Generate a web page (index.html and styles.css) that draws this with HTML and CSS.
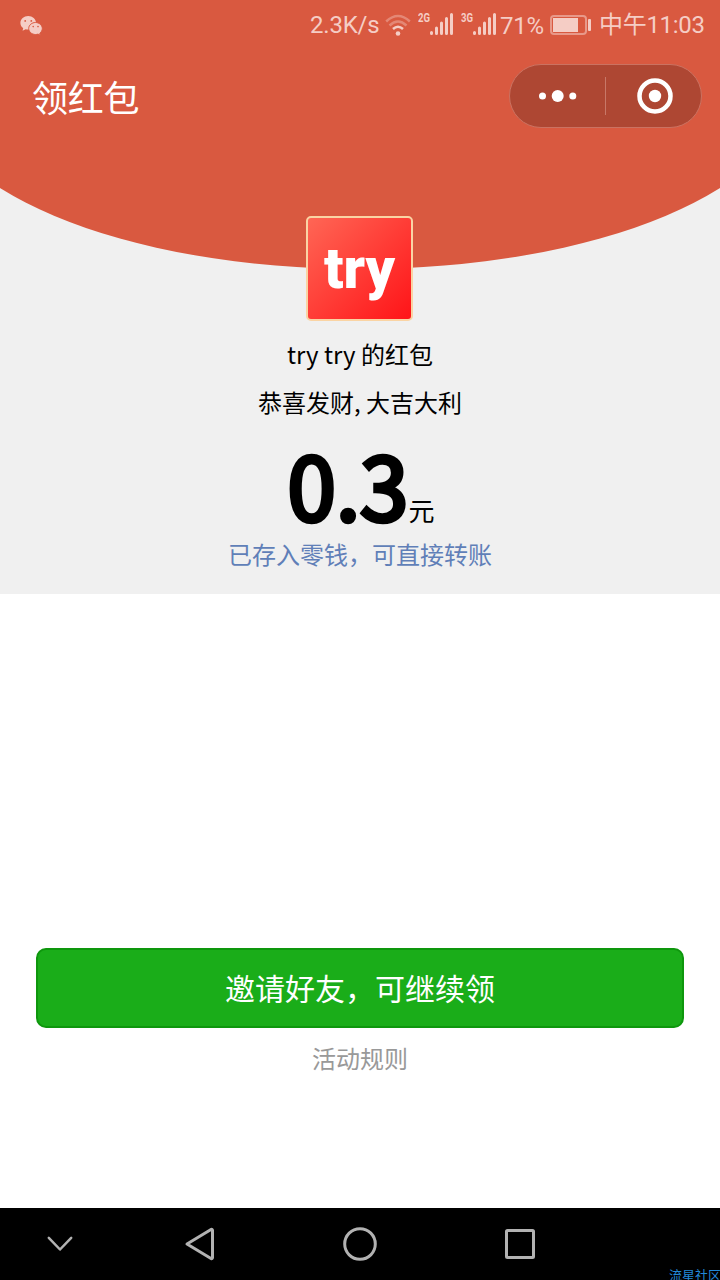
FILE: index.html
```html
<!DOCTYPE html>
<html lang="zh-CN">
<head>
    <meta charset="UTF-8">
    <meta name="viewport" content="width=device-width, initial-scale=1.0">
    <title>领红包</title>
    <link rel="stylesheet" href="styles.css">
</head>
<body>
    <div class="screen">
        <div class="hero">
            <div class="status-bar">
                <svg class="wechat" width="24" height="22" viewBox="0 0 24 22">
                    <path d="M8.2 1C3.900 1 .4 4 .4 7.900c0 2.200 1.100 4 2.800 5.200L2.600 15.800l3-1.600c.9.200 1.700.3 2.600.3 4.300 0 7.800-3 7.800-6.700S12.500 1 8.200 1z"/>
                    <path class="bubble" d="M15.500 7.500c-3.700 0-6.800 2.700-6.800 6s3.100 6 6.800 6c.9 0 1.700-.1 2.500-.4l2.400 1.200-.6-2.100c1.500-1.100 2.500-2.800 2.500-4.700 0-3.300-3.100-6-6.800-6z"/>
                    <g class="eyes">
                        <circle cx="5.200" cy="5.900" r=".9"/>
                        <circle cx="11.300" cy="5.900" r=".9"/>
                        <circle cx="13.200" cy="11.600" r=".8"/>
                        <circle cx="18" cy="11.600" r=".8"/>
                    </g>
                </svg>
                <div class="status-right">
                    <span class="speed">2.3K/s</span>
                    <svg class="wifi" width="26" height="24" viewBox="0 0 26 24">
                        <path class="faint" d="M1.200 7.500Q13-3.500 24.800 7.500"/>
                        <path class="faint" d="M4.500 11.500Q13 3.500 21.500 11.500"/>
                        <path d="M8 15Q13 10.500 18 15"/>
                        <circle cx="13" cy="19.500" r="2.300"/>
                    </svg>
                    <svg class="signal" width="36" height="26" viewBox="0 0 36 26">
                        <text x="0" y="10" textLength="12" lengthAdjust="spacingAndGlyphs">2G</text>
                        <path d="M13.500 20.500v1M18.500 16v5.500M23.500 11v10.500M28.500 6.500v15M33.500 2.500v19"/>
                    </svg>
                    <svg class="signal second" width="36" height="26" viewBox="0 0 36 26">
                        <text x="0" y="10" textLength="12" lengthAdjust="spacingAndGlyphs">3G</text>
                        <path d="M13.500 20.500v1M18.500 16v5.500M23.500 11v10.500M28.500 6.500v15M33.500 2.500v19"/>
                    </svg>
                    <span class="percent">71%</span>
                    <svg class="battery" width="42" height="20" viewBox="0 0 42 20">
                        <rect class="case" x="1" y="1" width="35" height="18" rx="3"/>
                        <rect x="3" y="3" width="25" height="14"/>
                        <rect x="38" y="4" width="3" height="12" rx="1"/>
                    </svg>
                    <span class="time">中午11:03</span>
                </div>
            </div>

            <div class="title-bar">
                <h1>领红包</h1>
                <div class="capsule">
                    <div class="capsule-btn">
                        <svg width="38" height="12" viewBox="0 0 38 12">
                            <circle cx="3.500" cy="6" r="3.500"/>
                            <circle cx="18.700" cy="6" r="6"/>
                            <circle cx="33.800" cy="6" r="3.500"/>
                        </svg>
                    </div>
                    <div class="capsule-line"></div>
                    <div class="capsule-btn close">
                        <svg width="36" height="36" viewBox="0 0 36 36">
                            <circle class="ring" cx="18" cy="18" r="15.500"/>
                            <circle cx="18" cy="18" r="6.200"/>
                        </svg>
                    </div>
                </div>
            </div>

            <div class="packet">
                <div class="avatar"><span>try</span></div>
                <p class="from">try try 的红包</p>
                <p class="wish">恭喜发财, 大吉大利</p>
                <p class="amount"><strong>0.3</strong><span>元</span></p>
                <p class="saved">已存入零钱，可直接转账</p>
            </div>
        </div>

        <div class="actions">
            <button class="invite-btn">邀请好友，可继续领</button>
            <a class="rules">活动规则</a>
        </div>

        <div class="nav-bar">
            <svg viewBox="0 0 120 72"><path class="down" d="M48.800 29.800L60 41.500l11.200-11.700"/></svg>
            <svg viewBox="0 0 160 72"><path d="M67 36L91 21.500Q92.500 21 92.500 22.500v27Q92.500 51 91 50.500z"/></svg>
            <svg viewBox="0 0 160 72"><circle cx="80" cy="36" r="15.300"/></svg>
            <svg viewBox="0 0 160 72"><rect x="66.500" y="22.500" width="27" height="27" rx="1"/></svg>
            <span class="watermark">流星社区</span>
        </div>
    </div>
</body>
</html>
```

FILE: styles.css
```css
:root {
    --red: #d95940;
    --gray: #f0f0f0;
    --green: #1aad19;
    --link: #607fb8;
    --status: #f5cdc5;
}

* {
    box-sizing: border-box;
    margin: 0;
    padding: 0;
}

body {
    font-family: "Noto Sans CJK SC", sans-serif;
    background: #fff;
    color: #000;
}

.screen {
    width: 720px;
    height: 1280px;
    display: flex;
    flex-direction: column;
    overflow: hidden;
}

.hero {
    position: relative;
    height: 594px;
    background: var(--gray);
    overflow: hidden;
    isolation: isolate;
}

/* curved red flap */
.hero::before {
    content: "";
    position: absolute;
    z-index: -1;
    left: -72px;
    top: -93px;
    width: 864px;
    height: 362px;
    border-radius: 50%;
    background: var(--red);
}

.hero::after {
    content: "";
    position: absolute;
    z-index: -1;
    left: 0;
    top: 0;
    width: 100%;
    height: 180px;
    background: var(--red);
}

.status-bar {
    height: 50px;
    padding: 1px 15px 0 20px;
    display: flex;
    justify-content: space-between;
    align-items: center;
    color: var(--status);
    font-family: Roboto, "Noto Sans CJK SC", sans-serif;
    font-size: 24px;
    line-height: 30px;
}

.status-bar svg {
    fill: var(--status);
    flex: none;
}

.wechat .bubble {
    stroke: var(--red);
    stroke-width: 1;
}

.wechat .eyes {
    fill: var(--red);
}

.status-right {
    display: flex;
    align-items: center;
    white-space: nowrap;
}

.speed {
    width: 75px;
    padding-bottom: 2px;
    letter-spacing: -0.2px;
}

.wifi {
    margin-right: 7px;
}

.wifi path {
    fill: none;
    stroke: var(--status);
    stroke-width: 2.5;
}

.wifi .faint {
    opacity: 0.4;
}

.signal {
    margin-bottom: 2px;
}

.signal path {
    stroke: var(--status);
    stroke-width: 3;
    stroke-linecap: round;
}

.signal text {
    font-size: 13px;
    font-weight: 700;
}

.signal.second {
    margin-left: 7px;
    margin-right: 3px;
}

.percent {
    width: 50px;
    letter-spacing: -0.3px;
}

.battery {
    margin-right: 7px;
    margin-bottom: 1px;
}

.battery .case {
    fill: none;
    stroke: #e8998a;
    stroke-width: 2;
}

.time {
    width: 106px;
    padding-bottom: 2px;
    letter-spacing: -0.3px;
}

.title-bar {
    height: 92px;
    padding: 0 18px 0 32px;
    display: flex;
    justify-content: space-between;
    align-items: center;
}

.title-bar h1 {
    color: #fff;
    font-size: 36px;
    font-weight: 400;
    line-height: 52px;
    letter-spacing: -0.3px;
}

.capsule {
    width: 193px;
    height: 64px;
    border: 1px solid #cb7261;
    border-radius: 32px;
    background: #ae4733;
    display: flex;
    align-items: center;
}

.capsule-btn {
    width: 95px;
    display: flex;
    justify-content: center;
    align-items: center;
}

.capsule-btn.close {
    padding-left: 2px;
}

.capsule-btn svg {
    fill: #fff;
}

.capsule-btn .ring {
    fill: none;
    stroke: #fff;
    stroke-width: 4.5;
}

.capsule-line {
    width: 1px;
    height: 38px;
    background: #c87868;
}

.packet {
    padding-top: 74px;
    display: flex;
    flex-direction: column;
    align-items: center;
}

.avatar {
    width: 107px;
    height: 105px;
    margin-right: 1px;
    border: 2px solid #fad4a4;
    border-radius: 5px;
    background: linear-gradient(135deg, #ff6655, #ff1418);
    display: flex;
    justify-content: center;
    align-items: center;
}

.avatar span {
    color: #fff;
    font-family: Roboto, sans-serif;
    font-size: 57px;
    font-weight: 900;
    line-height: 60px;
}

.from,
.wish,
.saved {
    font-size: 24px;
    line-height: 36px;
}

.from {
    margin-top: 15px;
}

.wish {
    margin-top: 12px;
}

.amount {
    height: 105px;
    display: flex;
    align-items: baseline;
    line-height: 104px;
    margin-top: 11px;
}

/* regular weight thickened by a stroke, keeps the digits narrow */
.amount strong {
    padding-left: 2px;
    font-size: 87px;
    font-weight: 400;
    -webkit-text-stroke: 4.5px #000;
}

.amount span {
    font-size: 26px;
}

.saved {
    color: var(--link);
}

.actions {
    flex: 1;
    padding: 354px 36px 0;
    display: flex;
    flex-direction: column;
    align-items: center;
}

.invite-btn {
    width: 100%;
    height: 80px;
    padding-bottom: 2px;
    border: 2px solid #0e970d;
    border-radius: 10px;
    background: var(--green);
    color: #fff;
    font-family: inherit;
    font-size: 30px;
    line-height: 44px;
}

.rules {
    margin-top: 12px;
    color: #999;
    font-size: 24px;
    line-height: 36px;
}

.nav-bar {
    position: relative;
    height: 72px;
    background: #000;
    display: grid;
    grid-template-columns: 120px 160px 160px 160px 120px;
}

.nav-bar svg {
    width: 100%;
    height: 72px;
    fill: none;
    stroke: #b2b2b2;
    stroke-width: 3;
    stroke-linejoin: round;
    stroke-linecap: round;
}

.nav-bar .down {
    stroke-width: 2.5;
}

.watermark {
    position: absolute;
    right: -1px;
    bottom: -4px;
    color: #2288d8;
    font-size: 13px;
    line-height: 18px;
}
```
